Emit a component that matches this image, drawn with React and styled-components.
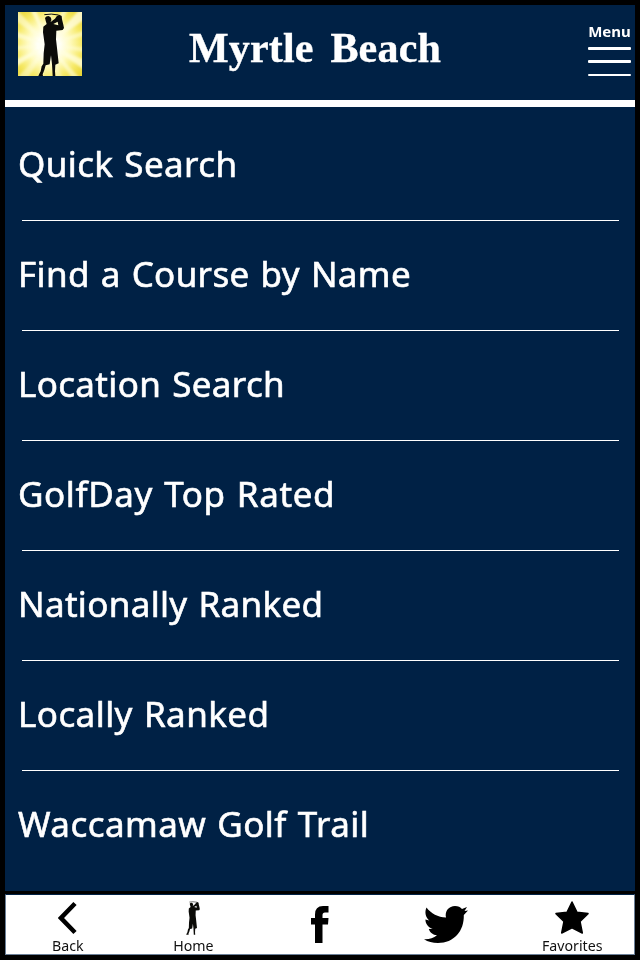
import React from 'react';
import styled, { createGlobalStyle } from 'styled-components';

const GlobalStyle = createGlobalStyle`
  * {
    box-sizing: border-box;
  }

  body {
    margin: 0;
    background-color: #000;
  }
`;

const Screen = styled.div`
  display: flex;
  flex-direction: column;
  width: 640px;
  height: 960px;
  padding: 5px;
  background-color: #000;
  overflow: hidden;
`;

const Header = styled.header`
  display: grid;
  grid-template-columns: 90px 1fr 90px;
  flex: none;
  height: 102px;
  background-color: #002145;
  border-bottom: 7px solid #fff;
`;

const Logo = styled.svg`
  display: block;
  width: 64px;
  height: 64px;
  margin: 7px 0 0 13px;
`;

const Title = styled.h1`
  margin: 18px 0 0;
  padding-right: 10px;
  color: #fff;
  font-family: "Liberation Serif", serif;
  font-size: 42px;
  font-weight: 700;
  line-height: 50px;
  letter-spacing: 0.2px;
  word-spacing: 6px;
  text-align: center;
  white-space: nowrap;
  -webkit-text-stroke: 0.4px #fff;
`;

const MenuButton = styled.div`
  display: flex;
  flex-direction: column;
  align-items: center;
  justify-self: end;
  width: 43px;
  margin: 16px 4px 0 0;
  color: #fff;
  font-family: "Noto Sans", sans-serif;
  font-size: 15px;
  font-weight: 700;
  line-height: 20px;
`;

const Bars = styled.div`
  display: flex;
  flex-direction: column;
  justify-content: space-between;
  width: 43px;
  height: 29px;
  margin-top: 6px;
`;

const Bar = styled.span`
  height: 2.5px;
  background-color: #fff;
  border-radius: 1px;
`;

const List = styled.ul`
  flex: none;
  height: 784px;
  margin: 0;
  padding: 4px 16px 0 17px;
  background-color: #002145;
  list-style: none;
`;

const Item = styled.li`
  height: 110px;
  padding-top: 29px;
  border-bottom: ${props => props.last ? 'none' : '1px solid #fff'};
  color: #fff;
  font-family: "Noto Sans", sans-serif;
  font-size: 35px;
  line-height: 48px;
  letter-spacing: ${props => props.tracking}px;
  word-spacing: 1.5px;
  white-space: nowrap;
  -webkit-text-stroke: 0.6px #fff;
`;

const Label = styled.span`
  margin-left: -4px;
`;

const TabBar = styled.nav`
  display: grid;
  grid-template-columns: repeat(5, 1fr);
  flex: none;
  height: 61px;
  margin-top: 3px;
  background-color: #fff;
  border: 1px solid #6b7f97;
  border-top-color: #002145;
`;

const Tab = styled.div`
  display: flex;
  flex-direction: column;
  align-items: center;
  padding-left: ${props => props.indent || 0}px;
  padding-right: ${props => props.outdent || 0}px;
  color: #111;
  font-family: "Noto Sans", sans-serif;
  font-size: 14.2px;
  line-height: 18px;
`;

const IconBox = styled.div`
  display: flex;
  align-items: center;
  justify-content: center;
  height: ${props => props.tall ? 59 : 42}px;
  padding-top: ${props => props.tall ? 0 : 3}px;
`;

const Icon = styled.svg`
  display: block;
  fill: #000;
`;

const Golfer = () => (
  <g fill="#0b0b08">
    <path d="M79 8 Q99 4 122 9" fill="none" stroke="#0b0b08" strokeWidth="3" />
    <path d="M81 18 Q84 12 91 12 Q99 13 100 21 Q101 27 97 31 L111 20 L116 13 L124 8 L131 12 L132 22 L136 38 L138 48 L134 54 L115 56 L114 82 L117 108 L122 154 L112 158 L111 178 L112 192 L104 192 L102 157 L99 130 L95 157 L83 160 L79 174 L74 187 L75 192 L61 192 L64 185 L68 178 L71 163 L76 155 L77 124 L80 97 L75 61 L76 44 L86 36 L83 26 Z M106 36 L121 40 L119 29 Z" fillRule="evenodd" />
  </g>
);

// [angle, half width, opacity] of every light ray behind the golfer
const rays = [
  [8, 4, 0.5], [29, 6, 0.75], [51, 4, 0.6], [73, 6, 0.4], [104, 4, 0.6],
  [128, 6, 0.5], [151, 5, 0.75], [174, 4, 0.5], [197, 5, 0.65], [222, 6, 0.6],
  [246, 4, 0.75], [270, 5, 0.45], [295, 4, 0.65], [318, 7, 0.8], [342, 4, 0.55],
];

const rayPath = (angle, half) => {
  const point = a => {
    const r = (a * Math.PI) / 180;
    return `${(92 + 180 * Math.cos(r)).toFixed(1)} ${(98 + 180 * Math.sin(r)).toFixed(1)}`;
  };
  return `M92 98 L${point(angle - half)} L${point(angle + half)} Z`;
};

const GolfLogo = () => (
  <Logo viewBox="0 0 192 192">
    <defs>
      <radialGradient id="sun" gradientUnits="userSpaceOnUse" cx="92" cy="98" r="132">
        <stop offset="0.25" stopColor="#fffffb" />
        <stop offset="0.48" stopColor="#fffbc0" />
        <stop offset="0.75" stopColor="#f6e967" />
        <stop offset="1" stopColor="#e8d537" />
      </radialGradient>
      <filter id="glow">
        <feGaussianBlur stdDeviation="3" />
      </filter>
    </defs>
    <rect width="192" height="192" fill="url(#sun)" />
    <g fill="#fffde0" filter="url(#glow)">
      {rays.map(([angle, half, opacity]) => (
        <path key={angle} d={rayPath(angle, half)} opacity={opacity} />
      ))}
    </g>
    <Golfer />
  </Logo>
);

const items = [
  { name: 'Quick Search', tracking: 0.38 },
  { name: 'Find a Course by Name', tracking: 0.35 },
  { name: 'Location Search', tracking: 0.35 },
  { name: 'GolfDay Top Rated', tracking: 0.6 },
  { name: 'Nationally Ranked', tracking: 0.33 },
  { name: 'Locally Ranked', tracking: 0.43 },
  { name: 'Waccamaw Golf Trail', tracking: 0.45 },
];

const App = () => (
  <>
    <GlobalStyle />
    <Screen>
      <Header>
        <GolfLogo />
        <Title>Myrtle Beach</Title>
        <MenuButton>
          Menu
          <Bars>
            <Bar />
            <Bar />
            <Bar />
          </Bars>
        </MenuButton>
      </Header>
      <List>
        {items.map((item, i) => (
          <Item key={item.name} tracking={item.tracking} last={i === items.length - 1}>
            <Label>{item.name}</Label>
          </Item>
        ))}
      </List>
      <TabBar>
        <Tab outdent={2}>
          <IconBox>
            <Icon width="20" height="34" viewBox="0 0 20 34">
              <path d="M17 2.5 L3 17 L17 31.5" fill="none" stroke="#000" strokeWidth="4.5" />
            </Icon>
          </IconBox>
          Back
        </Tab>
        <Tab outdent={2}>
          <IconBox>
            <Icon width="14" height="34" viewBox="60 4 79 188">
              <Golfer />
            </Icon>
          </IconBox>
          Home
        </Tab>
        <Tab>
          <IconBox tall>
            <Icon width="18" height="37" viewBox="0 0 18 37">
              <path d="M4 37 V18.5 H0 V12 H4 V8.5 Q4 0 12 0 H17.5 V6.5 H14 Q11.5 6.5 11.5 9 V12 H17.5 L17 18.5 H11.5 V37 Z" />
            </Icon>
          </IconBox>
        </Tab>
        <Tab>
          <IconBox tall>
            <Icon width="44" height="37" viewBox="0 0 44 37">
              <path d="M2.5 1.5 C7 7.5 14 11.3 22 11.5 C20.5 5 25 0 31 0 C34.2 0 36.4 1.3 38 3 L43 1 L40.5 5 L44 4.6 L39.8 9 C40.3 25 30 37 14 37 C8.5 37 4 35.8 0 33.3 C5 33.6 9.5 32 13 29.3 C8.8 29 6 26.5 4.8 23 L8.7 22.8 C4.2 21.5 1.5 18 1.4 13.5 L5.3 14.6 C1.5 11.4 .4 6 2.5 1.5 Z" />
            </Icon>
          </IconBox>
        </Tab>
        <Tab indent={2}>
          <IconBox>
            <Icon width="34" height="33" viewBox="0 0 34 33">
              <path d="M17 1 L22 11.3 L33 12.6 L25 20.5 L27.3 32 L17 26.8 L6.7 32 L9 20.5 L1 12.6 L12 11.3 Z" stroke="#000" strokeWidth="1.5" strokeLinejoin="round" />
            </Icon>
          </IconBox>
          Favorites
        </Tab>
      </TabBar>
    </Screen>
  </>
);

export default App;
